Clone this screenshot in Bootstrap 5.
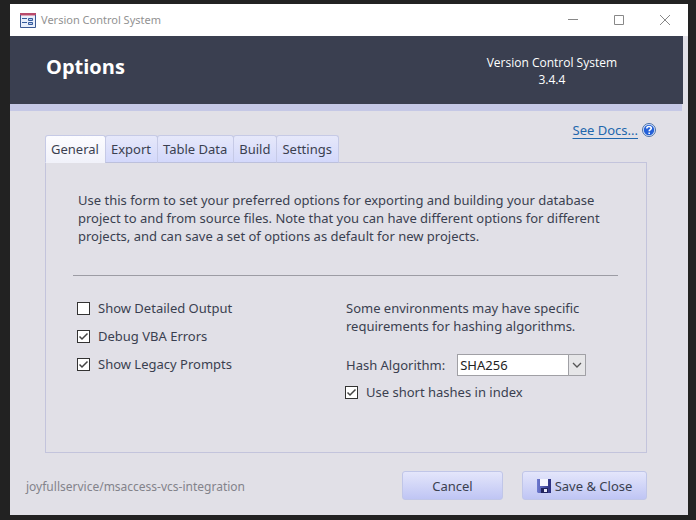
<!DOCTYPE html>
<html lang="en">
<head>
<meta charset="utf-8">
<meta name="viewport" content="width=device-width, initial-scale=1">
<title>Version Control System</title>
<link href="https://cdn.jsdelivr.net/npm/bootstrap@5.3.0/dist/css/bootstrap.min.css" rel="stylesheet">
<style>
  body { background: #222; color: #3a3f50; font: 13px/18px "Noto Sans", "Open Sans", sans-serif; padding: 4px 8px 5px 10px; }
  .app-window { background: #e1e0e7; }
  .title-bar { height: 32px; padding-left: 10px; color: #929292; font-size: 11px; line-height: 16px; }
  .title-bar .title-icon { margin-right: 5px; }
  .win-btn { width: 46px; height: 32px; color: #888; }
  .app-header { background: #3a3f50; margin-right: 5px; min-height: 68px; padding: 16px 66px 14px 36px; font-family: "Open Sans", sans-serif; }
  .app-header h1 { font-weight: bold; font-size: 20px; line-height: 30px; }
  .version { font-size: 12px; line-height: 17px; padding-top: 2px; }
  .accent-strip { height: 7px; background: #c5c8e6; margin-right: 6px; }
  .app-body { padding: 10px 41px 0 35px; }
  .docs-row { margin-right: -9px; height: 18px; }
  .docs-row a { color: #2167ad; text-underline-offset: 3px; }
  .app-tabs { margin-top: -4px; }
  .app-tabs .nav-link { height: 28px; padding: 4px 6px 3px 5px; border: 1px solid #c6cae6; border-radius: 3px 3px 0 0; margin: 0 0 -1px -1px; color: #3a3f50; background: linear-gradient(#e6e8fa, #d3d8fb); border-bottom-color: #bcc0dc; line-height: 19px; }
  .app-tabs .nav-item:first-child .nav-link { margin-left: 0; }
  .app-tabs .nav-link.active { color: #3a3f50; background: linear-gradient(#fcfcff, #f1f2fa); border-color: #c6cae6 #c6cae6 #f1f2fa; }
  .app-panel { border: 1px solid #c3c4dc; padding: 28px 28px 0 27px; min-height: 291px; }
  .intro { padding-left: 5px; margin-bottom: 30px; }
  .rule { margin: 0 0 23px; border-color: #9c9ca4; opacity: 1; }
  .options-left { width: 269px; padding-left: 4px; gap: 10px; }
  .check-row { gap: 8px; height: 18px; }
  .options-right { padding-left: 4px; }
  .options-right .check-row { margin-left: -1px; }
  .check-row .form-check-input { width: 13px; height: 13px; margin: 3px 0 0; border: 1px solid #333; border-radius: 0; background-color: #fff; background-size: 13px 13px; flex: none; }
  .check-row .form-check-input:checked { background-image: url("data:image/svg+xml,%3csvg xmlns='http://www.w3.org/2000/svg' viewBox='0 0 13 13'%3e%3cpath fill='none' stroke='%23444' stroke-width='1.5' d='M2.5 6.5 5 9 10.5 3.5'/%3e%3c/svg%3e"); }
  .hash-row { gap: 12px; margin: 19px 0 7px; }
  .hash-select { position: relative; width: 129px; }
  .hash-select select { appearance: none; display: block; width: 100%; height: 22px; padding: 0 20px 0 2px; border: 1px solid #a0a0a5; border-radius: 0; background: #fff; color: #222; font-size: 13px; line-height: 18px; }
  .hash-select svg { position: absolute; right: 0; top: 0; pointer-events: none; }
  .app-footer { padding: 18px 0 15px; margin-left: -19px; gap: 19px; }
  .repo { color: #83838b; font: 12px/18px "Noto Sans", "Open Sans", sans-serif; padding-top: 2px; }
  .app-btn { height: 29px; padding: 0; border: 1px solid #c0c6e8; border-radius: 3px; background: linear-gradient(#e4e6fb, #bfc5f4); color: #3a3f50; font-size: 13px; line-height: 18px; }
  .btn-cancel { width: 101px; }
  .btn-save { width: 125px; gap: 4px; }
</style>
<script src="https://cdn.jsdelivr.net/npm/bootstrap@5.3.0/dist/js/bootstrap.bundle.min.js" defer></script>
</head>
<body class="min-vh-100 d-flex">
<div class="app-window flex-grow-1">
  <div class="title-bar bg-white d-flex align-items-center">
    <svg width="16" height="15" viewBox="0 0 16 15" class="title-icon" aria-hidden="true"><path fill="#e9effb" stroke="#3c5a94" d="M.5.5h15v14H.5z"/><path fill="#b94b6c" d="M0 0h16v2H0z"/><path fill="#dba3b5" d="M1 2h14v1H1z"/><path stroke="#355b9c" d="M2 5.500h5M2 9.500h5"/><path fill="#b9caec" stroke="#355b9c" d="M8.500 5.500h4v2h-4zM8.500 9.500h4v2h-4z"/></svg>
    <span class="flex-grow-1">Version Control System</span>
    <button class="win-btn btn p-0 border-0" aria-label="Minimize"><svg width="10" height="10" viewBox="0 0 10 10" class="d-block mx-auto"><path stroke="currentColor" d="M0 4.500h10"/></svg></button>
    <button class="win-btn btn p-0 border-0" aria-label="Maximize"><svg width="10" height="10" viewBox="0 0 10 10" class="d-block mx-auto"><path fill="none" stroke="currentColor" d="M.5.5h9v9h-9z"/></svg></button>
    <button class="win-btn btn p-0 border-0" aria-label="Close"><svg width="10" height="10" viewBox="0 0 10 10" class="d-block mx-auto"><path stroke="currentColor" d="m0 0 10 10M10 0 0 10"/></svg></button>
  </div>
  <header class="app-header d-flex justify-content-between text-white">
    <h1 class="m-0">Options</h1>
    <div class="version text-center">Version Control System<br>3.4.4</div>
  </header>
  <div class="accent-strip"></div>
  <main class="app-body">
    <div class="docs-row d-flex justify-content-end align-items-center gap-1">
      <a href="#docs">See Docs...</a>
      <svg width="14" height="14" viewBox="0 0 14 14" aria-hidden="true"><circle cx="7" cy="7" r="6.500" fill="#dce8f8" stroke="#4b6fa8"/><circle cx="7" cy="7" r="5.200" fill="#2460d8"/><path d="M4.800 5.500C4.800 2.800 9.300 3 9.300 5.300 9.300 6.800 7.200 6.600 7.200 8.300M7.200 9.500V11" fill="none" stroke="#fff" stroke-width="1.600"/></svg>
    </div>
    <ul class="nav app-tabs" role="tablist">
      <li class="nav-item"><button class="nav-link active" role="tab" aria-selected="true">General</button></li>
      <li class="nav-item"><button class="nav-link" role="tab">Export</button></li>
      <li class="nav-item"><button class="nav-link" role="tab">Table Data</button></li>
      <li class="nav-item"><button class="nav-link" role="tab">Build</button></li>
      <li class="nav-item"><button class="nav-link" role="tab">Settings</button></li>
    </ul>
    <section class="app-panel">
      <p class="intro">Use this form to set your preferred options for exporting and building your database project to and from source files. Note that you can have different options for different projects, and can save a set of options as default for new projects.</p>
      <hr class="rule">
      <div class="d-flex flex-wrap">
        <div class="options-left d-flex flex-column">
          <div class="check-row d-flex"><input class="form-check-input" type="checkbox" id="detail"><label for="detail">Show Detailed Output</label></div>
          <div class="check-row d-flex"><input class="form-check-input" type="checkbox" id="debug" checked><label for="debug">Debug VBA Errors</label></div>
          <div class="check-row d-flex"><input class="form-check-input" type="checkbox" id="legacy" checked><label for="legacy">Show Legacy Prompts</label></div>
        </div>
        <div class="options-right">
          <p class="m-0">Some environments may have specific<br>requirements for hashing algorithms.</p>
          <div class="hash-row d-flex align-items-center"><label for="hash">Hash Algorithm:</label>
            <div class="hash-select"><select id="hash"><option>SHA256</option></select>
            <svg width="18" height="22" viewBox="0 0 18 22" aria-hidden="true"><path fill="#e6e6e8" stroke="#a0a0a5" d="M.5.5h17v21H.5z"/><path fill="none" stroke="#555" stroke-width="1.300" d="m5 9 4 4 4-4"/></svg></div></div>
          <div class="check-row d-flex"><input class="form-check-input" type="checkbox" id="short" checked><label for="short">Use short hashes in index</label></div>
        </div>
      </div>
    </section>
    <footer class="app-footer d-flex align-items-center">
      <span class="repo me-auto">joyfullservice/msaccess-vcs-integration</span>
      <button class="btn app-btn btn-cancel">Cancel</button>
      <button class="btn app-btn btn-save d-inline-flex align-items-center justify-content-center"><svg width="14" height="14" viewBox="0 0 14 14" aria-hidden="true"><defs><linearGradient id="disk"><stop stop-color="#6e7ad0"/><stop offset="1" stop-color="#2b2f80"/></linearGradient></defs><path fill="url(#disk)" d="M0 0h14v14H1l-1-1z"/><path fill="#f5f6ff" d="M3 0h8v7H3z"/><path fill="#20235e" d="M4 9h7v5H4z"/><path fill="#e6e8fa" d="M7 10h3v3H7z"/></svg>Save &amp; Close</button>
    </footer>
  </main>
</div>
</body>
</html>
